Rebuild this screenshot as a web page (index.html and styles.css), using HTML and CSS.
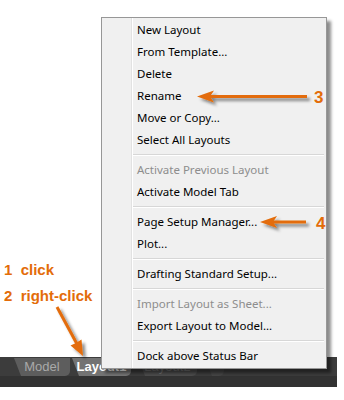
FILE: index.html
```html
<!DOCTYPE html>
<html lang="en">
<head>
    <meta charset="UTF-8">
    <title>Layout Tab Menu</title>
    <link rel="stylesheet" href="styles.css">
</head>
<body>
    <div class="screen">
        <div class="canvas">
            <div class="steps">
                <p>1  click</p>
                <p>2  right-click</p>
            </div>
        </div>

        <div class="tabbar">
            <div class="tab model">Model</div>
            <div class="tab current">Layout1</div>
            <div class="tab other">Layout2</div>
            <div class="tab plus"></div>
        </div>

        <ul class="menu">
            <li>New Layout</li>
            <li>From Template...</li>
            <li>Delete</li>
            <li>Rename</li>
            <li>Move or Copy...</li>
            <li>Select All Layouts</li>
            <li class="sep"></li>
            <li class="off">Activate Previous Layout</li>
            <li>Activate Model Tab</li>
            <li class="sep"></li>
            <li>Page Setup Manager...</li>
            <li>Plot...</li>
            <li class="sep"></li>
            <li>Drafting Standard Setup...</li>
            <li class="sep"></li>
            <li class="off">Import Layout as Sheet...</li>
            <li>Export Layout to Model...</li>
            <li class="sep"></li>
            <li>Dock above Status Bar</li>
        </ul>

        <svg class="callouts" width="344" height="400" viewBox="0 0 344 400">
            <defs>
                <filter id="shade" x="-20%" y="-20%" width="140%" height="160%">
                    <feDropShadow dx="3" dy="3" stdDeviation="1.4" flood-color="#000" flood-opacity="0.45"/>
                </filter>
            </defs>
            <g class="arrow" filter="url(#shade)">
                <!-- 3: rename -->
                <rect x="209" y="95" width="98" height="3"/>
                <polygon points="197,96.5 214,90.5 210,96.5 214,102.5"/>
                <!-- 4: page setup -->
                <rect x="272" y="220.5" width="34" height="3"/>
                <polygon points="260,222 277,216 273,222 277,228"/>
                <!-- tab -->
                <line x1="57" y1="307" x2="77" y2="344" stroke-width="3"/>
                <polygon points="83,356 70.5,345.5 76,343 81.5,339.5"/>
            </g>
            <text class="num" x="314" y="103">3</text>
            <text class="num" x="316" y="228.5">4</text>
        </svg>
    </div>
</body>
</html>
```

FILE: styles.css
```css
body {margin: 0; background: #fff; font-family: 'Liberation Sans', Arial, sans-serif;}
.screen {position: relative; width: 344px; height: 400px; overflow: hidden;}

.canvas {height: 357px; box-sizing: border-box; padding: 257px 0 0 4px;}
.steps p {margin: 0; height: 26px; line-height: 26px; font-size: 15px; font-weight: bold; color: #e36c09; white-space: pre;}

.tabbar {display: flex; align-items: flex-start; width: 337px; height: 30px; background: linear-gradient(#3c3c3c 0, #3c3c3c 19px, #323232 19px);}
.tab {height: 18px; margin-top: 1px; line-height: 17px; font-size: 13px; text-align: center; border-radius: 0 0 5px 5px; clip-path: polygon(0 0, 100% 0, 100% 100%, 7px 100%);}
.tab.model {width: 56px; margin-left: 14px; background: #5d5d5d; color: #a9a9a9;}
.tab.current {width: 59px; margin-left: 2px; background: #737373; color: #fff; font-weight: bold;}
.tab.other {width: 59px; margin-left: 7px; background: #4b4b4b; color: #6e6e6e;}
.tab.plus {width: 19px; margin-left: 8px; background: #454545;}

.menu {position: absolute; left: 101px; top: 17px; width: 224px; margin: 0; padding: 1px 0; list-style: none; background: #f0f0f0 linear-gradient(90deg, transparent 29px, #e2e2e2 29px, #e2e2e2 30px, #fff 30px, #fff 31px, transparent 31px); border: 1px solid #979797; box-shadow: 4px 4px 3px rgba(0, 0, 0, 0.45); font-family: 'Noto Sans', sans-serif; font-size: 11.5px; color: #000;}
.menu li {height: 22px; line-height: 22px; padding-left: 35px; white-space: nowrap;}
.menu li.off {color: #8d8d8d;}
.menu li.sep {height: 8px; padding: 0; margin-left: 31px; margin-right: 2px; background: linear-gradient(transparent 3px, #d7d7d7 3px, #d7d7d7 4px, #fff 4px, #fff 5px, transparent 5px);}

.callouts {position: absolute; left: 0; top: 0; pointer-events: none;}
.arrow {fill: #e36c09; stroke: #e36c09;}
.arrow rect, .arrow polygon {stroke: none;}
.num {fill: #e36c09; font-family: 'Liberation Sans', Arial, sans-serif; font-weight: bold; font-size: 17px;}
```
